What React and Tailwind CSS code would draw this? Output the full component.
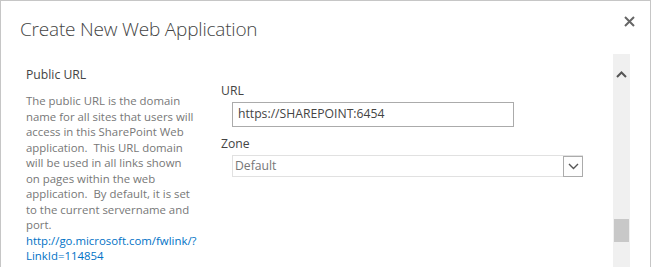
import React from "react";

export default function App() {
  const font = { fontFamily: '"Open Sans", "Noto Sans", sans-serif' };
  return (
    <div className="w-[651px] h-[267px] overflow-hidden bg-white" style={font}>
      <div className="w-[651px] h-[267px] border-l border-t border-r border-[#c6c6c6] flex flex-col">
        <div className="h-[53px] shrink-0 flex items-start justify-between">
          <div className="pl-[19px] pt-[15px] text-[19px] leading-[26px] font-light tracking-[-0.2px] text-[#444] whitespace-nowrap">
            Create New Web Application
          </div>
          <div className="pr-[15px] pt-[15px]">
            <svg width="11" height="11" viewBox="0 0 11 11">
              <path d="M1 1 L10 10 M10 1 L1 10" stroke="#666" strokeWidth="2" />
            </svg>
          </div>
        </div>
        <div className="flex-1 min-h-0 flex">
          <div className="flex-1 flex">
            <div className="w-[194px] pl-[25px] pt-[13px] whitespace-nowrap">
              <div className="text-[12.2px] leading-[16px] text-[#444]">Public URL</div>
              <div className="mt-[10px] text-[11.4px] leading-[15.5px] text-[#777]">
                The public URL is the domain<br />
                name for all sites that users will<br />
                access in this SharePoint Web<br />
                application.&nbsp; This URL domain<br />
                will be used in all links shown<br />
                on pages within the web<br />
                application.&nbsp; By default, it is set<br />
                to the current servername and<br />
                port.<br />
                <span className="text-[#0072c6]">
                  http://go.microsoft.com/fwlink/?<br />
                  LinkId=114854
                </span>
              </div>
            </div>
            <div className="pl-[26px] pt-[29px]">
              <div className="text-[12.2px] leading-[16px] text-[#444]">URL</div>
              <div className="ml-[11px] mt-[3px] w-[282px] h-[25px] border border-[#ababab] flex items-center px-[5px] text-[12.2px] text-[#444]">
                https://SHAREPOINT:6454
              </div>
              <div className="mt-[9px] text-[12.2px] leading-[16px] text-[#444]">Zone</div>
              <div className="ml-[11px] mt-[3px] w-[351px] h-[22px] border border-[#e1e1e1] flex items-center justify-between">
                <span className="pl-[2px] text-[12.2px] text-[#777]">Default</span>
                <div className="w-[20px] h-[21px] -mr-px border border-[#ababab] bg-[#fdfdfd] flex items-center justify-center">
                  <svg width="11" height="7" viewBox="0 0 11 7">
                    <path d="M1 1 L5.5 5.5 L10 1" stroke="#555" strokeWidth="1.4" fill="none" />
                  </svg>
                </div>
              </div>
            </div>
          </div>
          <div className="w-[17px] mr-[20px] bg-[#f0f0f0] flex flex-col items-center">
            <svg className="mt-[17px]" width="11" height="7" viewBox="0 0 11 7">
              <path d="M1 6 L5.5 1.5 L10 6" stroke="#555" strokeWidth="2" fill="none" />
            </svg>
            <div className="mt-[141px] w-[15px] h-[23px] bg-[#c8c8c8]" />
          </div>
        </div>
      </div>
    </div>
  );
}
